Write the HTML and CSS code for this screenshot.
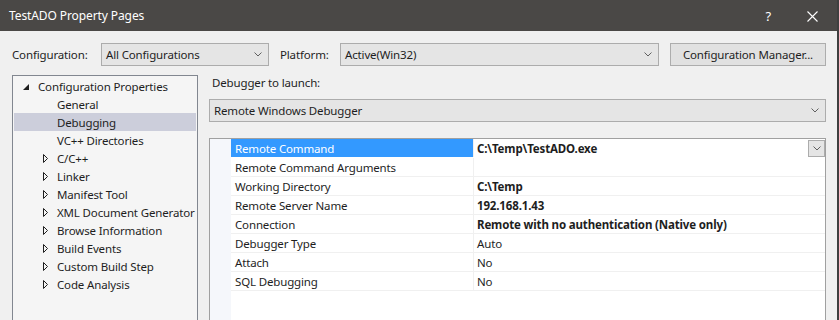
FILE: index.html
```html
<!DOCTYPE html>
<html>
<head>
<meta charset="utf-8">
<link rel="stylesheet" href="styles.css">
</head>
<body>
<div class="window">
  <div class="titlebar">
    <span class="title">TestADO Property Pages</span>
    <span class="help">?</span>
    <svg class="close" width="11" height="11" viewBox="0 0 11 11"><path d="M0.5 0.5 L10.5 10.5 M10.5 0.5 L0.5 10.5" stroke="#ffffff" stroke-width="1.1" fill="none"/></svg>
  </div>
  <div class="config-row">
    <span class="lbl lbl-config">Configuration:</span>
    <div class="combo combo-config"><span>All Configurations</span><svg class="chev" width="8" height="5" viewBox="0 0 8 5"><path d="M0.5 0.5 L4 4 L7.5 0.5" stroke="#606060" fill="none"/></svg></div>
    <span class="lbl lbl-platform">Platform:</span>
    <div class="combo combo-platform"><span>Active(Win32)</span><svg class="chev" width="8" height="5" viewBox="0 0 8 5"><path d="M0.5 0.5 L4 4 L7.5 0.5" stroke="#606060" fill="none"/></svg></div>
    <div class="button">Configuration Manager...</div>
  </div>
  <div class="main">
    <div class="tree">
      <div class="node root"><svg class="tri" width="6" height="6" viewBox="0 0 6 6"><path d="M6 0 L6 6 L0 6 Z" fill="#1e1e1e"/></svg><span>Configuration Properties</span></div>
      <div class="node leaf"><span>General</span></div>
      <div class="node leaf selected"><span>Debugging</span></div>
      <div class="node leaf"><span>VC++ Directories</span></div>
      <div class="node child"><svg class="tri" width="5" height="9" viewBox="0 0 5 9"><path d="M0.5 0.5 L4.5 4.5 L0.5 8.5 Z" stroke="#1e1e1e" fill="none"/></svg><span>C/C++</span></div>
      <div class="node child"><svg class="tri" width="5" height="9" viewBox="0 0 5 9"><path d="M0.5 0.5 L4.5 4.5 L0.5 8.5 Z" stroke="#1e1e1e" fill="none"/></svg><span>Linker</span></div>
      <div class="node child"><svg class="tri" width="5" height="9" viewBox="0 0 5 9"><path d="M0.5 0.5 L4.5 4.5 L0.5 8.5 Z" stroke="#1e1e1e" fill="none"/></svg><span>Manifest Tool</span></div>
      <div class="node child"><svg class="tri" width="5" height="9" viewBox="0 0 5 9"><path d="M0.5 0.5 L4.5 4.5 L0.5 8.5 Z" stroke="#1e1e1e" fill="none"/></svg><span>XML Document Generator</span></div>
      <div class="node child"><svg class="tri" width="5" height="9" viewBox="0 0 5 9"><path d="M0.5 0.5 L4.5 4.5 L0.5 8.5 Z" stroke="#1e1e1e" fill="none"/></svg><span>Browse Information</span></div>
      <div class="node child"><svg class="tri" width="5" height="9" viewBox="0 0 5 9"><path d="M0.5 0.5 L4.5 4.5 L0.5 8.5 Z" stroke="#1e1e1e" fill="none"/></svg><span>Build Events</span></div>
      <div class="node child"><svg class="tri" width="5" height="9" viewBox="0 0 5 9"><path d="M0.5 0.5 L4.5 4.5 L0.5 8.5 Z" stroke="#1e1e1e" fill="none"/></svg><span>Custom Build Step</span></div>
      <div class="node child"><svg class="tri" width="5" height="9" viewBox="0 0 5 9"><path d="M0.5 0.5 L4.5 4.5 L0.5 8.5 Z" stroke="#1e1e1e" fill="none"/></svg><span>Code Analysis</span></div>
    </div>
    <div class="panel">
      <div class="panel-label">Debugger to launch:</div>
      <div class="combo combo-debugger"><span>Remote Windows Debugger</span><svg class="chev" width="8" height="5" viewBox="0 0 8 5"><path d="M0.5 0.5 L4 4 L7.5 0.5" stroke="#606060" fill="none"/></svg></div>
      <div class="grid">
        <div class="margin"></div>
        <div class="rows">
          <div class="row selected"><div class="name">Remote Command</div><div class="value bold">C:\Temp\TestADO.exe<div class="dd"><svg width="8" height="5" viewBox="0 0 8 5"><path d="M0.5 0.5 L4 4 L7.5 0.5" stroke="#606060" fill="none"/></svg></div></div></div>
          <div class="row"><div class="name">Remote Command Arguments</div><div class="value"></div></div>
          <div class="row"><div class="name">Working Directory</div><div class="value bold">C:\Temp</div></div>
          <div class="row"><div class="name">Remote Server Name</div><div class="value bold">192.168.1.43</div></div>
          <div class="row"><div class="name">Connection</div><div class="value bold">Remote with no authentication (Native only)</div></div>
          <div class="row"><div class="name">Debugger Type</div><div class="value">Auto</div></div>
          <div class="row"><div class="name">Attach</div><div class="value">No</div></div>
          <div class="row"><div class="name">SQL Debugging</div><div class="value">No</div></div>
        </div>
      </div>
    </div>
  </div>
</div>
</body>
</html>
```

FILE: styles.css
```css
* { box-sizing: border-box; }
html, body { margin: 0; padding: 0; }
body {
  width: 839px;
  height: 320px;
  overflow: hidden;
  font-family: "Noto Sans", "Open Sans", sans-serif;
  font-size: 11.5px;
  letter-spacing: -0.15px;
  color: #1e1e1e;
  background: #f0f0f0;
}
svg { flex: none; }
.window {
  width: 839px;
  height: 320px;
  display: flex;
  flex-direction: column;
  background: #f0f0f0;
  border-right: 2px solid #3f3f3f;
}
.titlebar {
  height: 31px;
  flex: none;
  background: #4a4846;
  color: #ffffff;
  display: flex;
  align-items: center;
  padding-left: 9px;
  padding-top: 1px;
}
.title { font-size: 12px; flex: 1; line-height: 16px; letter-spacing: -0.1px; }
.help { font-size: 13px; margin-right: 36px; line-height: 16px; }
.close { margin-right: 19px; }
.config-row {
  display: flex;
  align-items: center;
  height: 23px;
  margin-top: 12px;
  padding-left: 12px;
  flex: none;
}
.lbl { display: block; line-height: 16px; padding-top: 1px; }
.lbl-config { width: 89px; }
.lbl-platform { width: 60px; margin-left: 11px; }
.combo {
  height: 23px;
  background: #e5e5e5;
  border: 1px solid #acacac;
  display: flex;
  align-items: center;
  padding-left: 4px;
  padding-right: 6px;
}
.combo span { flex: 1; line-height: 16px; padding-top: 1px; }
.combo-config { width: 168px; }
.combo-platform { width: 319px; }
.button {
  width: 156px;
  height: 23px;
  margin-left: 11px;
  background: #e1e1e1;
  border: 1px solid #adadad;
  display: flex;
  align-items: center;
  justify-content: center;
  line-height: 16px;
  padding-top: 1px;
}
.main {
  flex: 1;
  display: flex;
  margin-top: 9px;
  padding-left: 12px;
  min-height: 0;
}
.tree {
  width: 186px;
  height: 260px;
  background: #f5f5f5;
  border: 1px solid #828790;
  padding: 1px 1px 0 1px;
  overflow: hidden;
}
.node {
  height: 18px;
  display: flex;
  align-items: center;
  white-space: nowrap;
  line-height: 16px;
}
.node span { padding-top: 1px; }
.node.selected { background: #cccedb; }
.root .tri { margin-left: 9px; margin-right: 9px; margin-top: 1px; }
.leaf { padding-left: 43px; }
.child .tri { margin-left: 29px; margin-right: 9px; }
.panel {
  width: 617px;
  margin-left: 11px;
  display: flex;
  flex-direction: column;
}
.panel-label {
  height: 24px;
  line-height: 16px;
  padding-left: 3px;
  padding-top: 0px;
}
.combo-debugger { width: 617px; flex: none; }
.grid {
  margin-top: 16px;
  flex: 1;
  display: flex;
  background: #ffffff;
  border: 1px solid #a0a0a0;
  border-bottom: none;
}
.margin { width: 21px; background: #f5f7fb; flex: none; }
.rows { flex: 1; }
.row {
  display: flex;
  height: 19px;
  border-bottom: 1px solid #f0f0f0;
}
.name {
  width: 243px;
  padding-left: 4px;
  padding-top: 1px;
  line-height: 17px;
  border-right: 1px solid #f0f0f0;
  white-space: nowrap;
}
.row.selected { border-bottom-color: #ffffff; }
.row.selected .name { background: #3399ff; color: #ffffff; }
.value {
  flex: 1;
  position: relative;
  padding-left: 3px;
  padding-top: 1px;
  line-height: 17px;
  white-space: nowrap;
}
.bold { font-weight: bold; }
.dd {
  position: absolute;
  right: 0;
  top: 1px;
  width: 17px;
  height: 17px;
  background: #e5e5e5;
  border: 1px solid #acacac;
  display: flex;
  align-items: center;
  justify-content: center;
}
```
